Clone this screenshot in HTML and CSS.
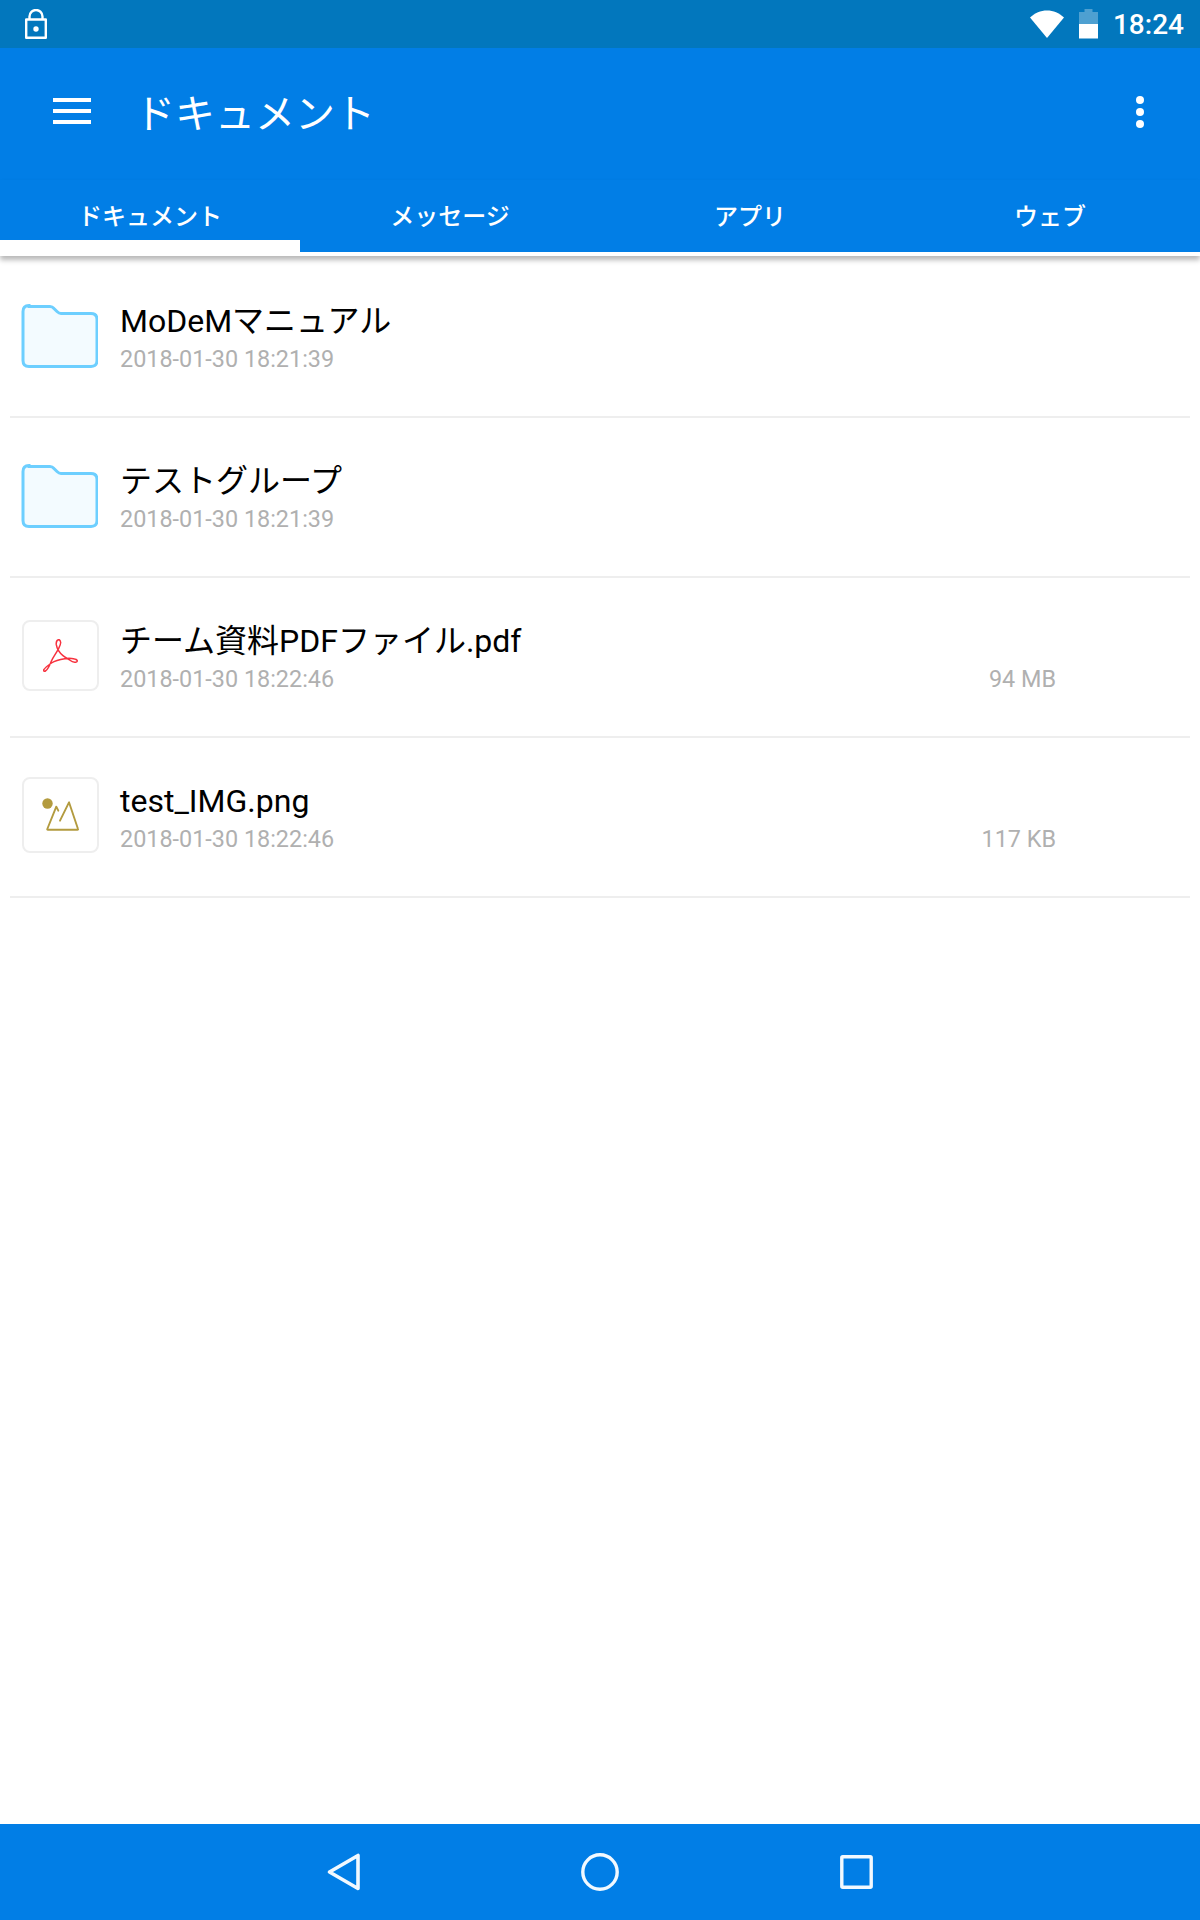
FILE: index.html
```html
<!DOCTYPE html>
<html lang="ja">
<head>
<meta charset="utf-8">
<title>ドキュメント</title>
<link rel="stylesheet" href="styles.css">
</head>
<body>
<div class="screen">
  <div class="status">
    <svg class="lock" width="22" height="30" viewBox="0 0 22 30"><rect x="1.200" y="10.500" width="19.600" height="18.300" fill="none" stroke="#fff" stroke-width="2.400" stroke-linejoin="round"/><path d="M4.500 10V7.500a6.500 6.500 0 0 1 13 0V10" fill="none" stroke="#fff" stroke-width="2.400"/><circle cx="11" cy="20" r="2.700" fill="#fff"/></svg>
    <div class="status-right">
      <svg class="wifi" width="34" height="28" viewBox="0 0 34 28"><path d="M0 7.500C5 3 10.500.5 17 .5S29 3 34 7.500L17 28z" fill="#fff"/></svg>
      <svg class="battery" width="19" height="30" viewBox="0 0 19 30"><path d="M5.500 0h8v3H19v12H0V3h5.500z" fill="#fff" fill-opacity=".3"/><path d="M0 15h19v14.500H0z" fill="#fff"/></svg>
      <span class="clock">18:24</span>
    </div>
  </div>
  <header class="appbar">
    <svg class="menu" width="38" height="26" viewBox="0 0 38 26"><path d="M0 0h38v4H0zM0 11h38v4H0zM0 22h38v4H0z" fill="#fff"/></svg>
    <h1 class="title">ドキュメント</h1>
    <svg class="more" width="8" height="32" viewBox="0 0 8 32"><circle cx="4" cy="4" r="4" fill="#fff"/><circle cx="4" cy="16" r="4" fill="#fff"/><circle cx="4" cy="28" r="4" fill="#fff"/></svg>
  </header>
  <nav class="tabs">
    <div class="tab active">ドキュメント</div>
    <div class="tab">メッセージ</div>
    <div class="tab">アプリ</div>
    <div class="tab">ウェブ</div>
  </nav>
  <main class="list">
    <div class="row">
      <svg class="icon" width="78" height="66" viewBox="0 0 78 66"><path d="M9 2.500h21c2 0 3 .8 4 2l3 3c1 1 2 2 4 2h30c4 0 6 2.500 6 6v41c0 4-2 6-6 6H9c-4 0-6-2-6-6v-49c0-4 2-6 6-6z" fill="#f3fbff" stroke="#6dcfff" stroke-width="3"/></svg>
      <div class="text"><div class="name">MoDeMマニュアル</div><div class="meta">2018-01-30 18:21:39</div></div>
    </div>
    <div class="row">
      <svg class="icon" width="78" height="66" viewBox="0 0 78 66"><path d="M9 2.500h21c2 0 3 .8 4 2l3 3c1 1 2 2 4 2h30c4 0 6 2.500 6 6v41c0 4-2 6-6 6H9c-4 0-6-2-6-6v-49c0-4 2-6 6-6z" fill="#f3fbff" stroke="#6dcfff" stroke-width="3"/></svg>
      <div class="text"><div class="name">テストグループ</div><div class="meta">2018-01-30 18:21:39</div></div>
    </div>
    <div class="row">
      <div class="tile">
        <svg width="36" height="33" viewBox="0 0 36 33"><path d="M15.600.7C13.800 1 13 3 13.300 5.700 14 10 16.600 14 20 16.600c2 1.800 4.600 3 6.600 4.400 2 1.600 5 2.800 7 1.800 1.400-.9.400-2.300-2-2.800-3-.7-6.200-.9-9.800-.3-5.400.8-9.600 1.800-13.300 4.300C5.700 26 2 28.700.8 30.700c-.4 1.300.5 2 1.600 1.300 2.400-1.400 4.400-5.700 5.900-9.700C10 18 13.300 14 15 10.700c1.500-3 3.200-5.900 2.600-7.700-.3-1.400-1-2.500-2-2.300z" fill="none" stroke="#f7323f" stroke-width="1.500" stroke-linejoin="round"/></svg>
      </div>
      <div class="text"><div class="name">チーム資料PDFファイル.pdf</div><div class="meta">2018-01-30 18:22:46</div></div>
      <div class="size">94 MB</div>
    </div>
    <div class="row">
      <div class="tile tall">
        <svg width="38" height="34" viewBox="0 0 38 34"><circle cx="5.500" cy="5.500" r="5.200" fill="#b39b3f"/><path d="M16.300 12.700l-2-4L5.300 31q-.3.800.5.800h29.700q.8 0 .5-.8L27 4.300 18 22.700" fill="none" stroke="#b39b3f" stroke-width="1.900" stroke-linejoin="round" stroke-linecap="round"/></svg>
      </div>
      <div class="text"><div class="name">test_IMG.png</div><div class="meta">2018-01-30 18:22:46</div></div>
      <div class="size">117 KB</div>
    </div>
  </main>
  <footer class="navbar">
    <svg width="33" height="38" viewBox="0 0 33 38"><path d="M31 2.500v33L2.500 19z" fill="none" stroke="#f2f9ff" stroke-width="3.600" stroke-linejoin="round"/></svg>
    <svg width="38" height="38" viewBox="0 0 38 38"><circle cx="19" cy="19" r="17.200" fill="none" stroke="#f2f9ff" stroke-width="3.400"/></svg>
    <svg width="33" height="34" viewBox="0 0 33 34"><rect x="1.800" y="1.800" width="29.400" height="30.400" rx="1" fill="none" stroke="#f2f9ff" stroke-width="3.400"/></svg>
  </footer>
</div>
</body>
</html>
```
FILE: styles.css
```css
* { box-sizing: border-box; }
html, body { margin: 0; padding: 0; }
body { font-family: Roboto, "Noto Sans CJK JP", sans-serif; background: #fff; }
.screen { width: 1200px; height: 1920px; display: flex; flex-direction: column; overflow: hidden; }
.status { height: 48px; background: #0277bd; display: flex; align-items: center; justify-content: space-between; padding: 0 16px 0 25px; color: #fff; flex: none; }
.status-right { display: flex; align-items: center; }
.wifi { margin-right: 15px; }
.battery { margin-right: 15px; }
.clock { font-size: 28px; font-weight: 500; }
.appbar { height: 132px; background: #017ee6; display: flex; align-items: flex-start; padding: 50px 56px 0 53px; color: #fff; flex: none; }
.title { flex: 1; margin: -11px 0 0 44px; font-size: 40px; font-weight: 400; line-height: 56px; }
.more { margin-top: -2px; }
.tabs { height: 76px; background: #017ee6; display: grid; grid-template-columns: repeat(4, 1fr); border-bottom: 4px solid #fff; box-shadow: 0 4px 5px rgba(0,0,0,.28); position: relative; flex: none; }
.tab { color: #fff; text-align: center; font-size: 24px; font-weight: 500; line-height: 36px; padding-top: 19px; height: 76px; }
.tab.active { border-bottom: 16px solid #fff; }
.list { flex: 1; padding: 2px 10px 0; }
.row { height: 160px; display: flex; align-items: center; padding: 0 134px 0 12px; border-bottom: 2px solid #eee; }
.icon { flex: none; margin: 0 22px 0 -2px; }
.tile { width: 77px; height: 71px; flex: none; border: 2px solid #eee; border-radius: 8px; margin: 0 21px 4px 0; display: flex; align-items: center; justify-content: center; }
.tile.tall { height: 76px; }
.text { flex: 1; min-width: 0; padding-top: 4px; }
.name { font-size: 32px; line-height: 40px; color: #000; }
.meta { font-size: 23.400px; line-height: 36px; color: #b0b0b0; }
.size { font-size: 23.400px; line-height: 36px; color: #b0b0b0; align-self: flex-end; margin-bottom: 39px; }
.navbar { height: 96px; background: #017ee6; display: flex; align-items: center; justify-content: center; gap: 221px; flex: none; }
```
